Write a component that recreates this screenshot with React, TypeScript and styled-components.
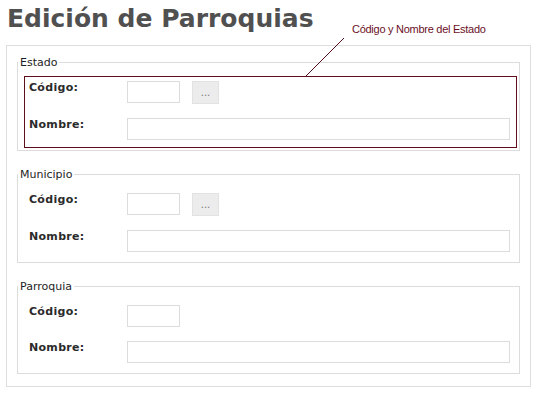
import React from 'react';
import styled, { createGlobalStyle } from 'styled-components';

const GlobalStyle = createGlobalStyle`
  html, body {
    margin: 0;
    padding: 0;
    background: #ffffff;
  }
  body {
    font-family: "DejaVu Sans", Verdana, sans-serif;
  }
`;

type Group = {
  title: string;
  lookup: boolean;
};

const groups: Group[] = [
  { title: 'Estado', lookup: true },
  { title: 'Municipio', lookup: true },
  { title: 'Parroquia', lookup: false },
];

const App = () => {
  return (
    <Page>
      <GlobalStyle />
      <Title>Edición de Parroquias</Title>
      <FormBox>
        {groups.map((g) => (
          <Group key={g.title}>
            <Legend>{g.title}</Legend>
            <Row>
              <Label>Código:</Label>
              <CodeInput type="text" />
              {g.lookup && <LookupButton type="button">...</LookupButton>}
            </Row>
            <Row>
              <Label>Nombre:</Label>
              <NameInput type="text" />
            </Row>
          </Group>
        ))}
      </FormBox>

      {/* annotation drawn over the screenshot */}
      <Note>Código y Nombre del Estado</Note>
      <Pointer width="60" height="50" viewBox="0 0 60 50">
        <line x1="5" y1="45" x2="44" y2="6" stroke="#5a0f1c" strokeWidth="1" />
      </Pointer>
      <Highlight />
    </Page>
  );
};

export default App;

// Styled Components
const Page = styled.div`
  position: relative;
  width: 538px;
  height: 397px;
  padding: 0 7px 0 6px;
  box-sizing: border-box;
`;

const Title = styled.h1`
  margin: 0 0 12px 1px;
  padding-top: 4px;
  font-family: "DejaVu Sans", Verdana, sans-serif;
  font-size: 25px;
  line-height: 29px;
  font-weight: bold;
  color: #505050;
`;

const FormBox = styled.div`
  border: 1px solid #dedede;
  padding: 10px 10px 12px;
`;

const Group = styled.fieldset`
  margin: 0 0 17px;
  padding: 12px 9px 10px 11px;
  border: 1px solid #dcdcdc;
  display: flex;
  flex-direction: column;
  gap: 14px;

  &:last-child {
    margin-bottom: 0;
  }
`;

const Legend = styled.legend`
  padding: 0 2px;
  margin-left: -11px;
  font-size: 11px;
  line-height: 13px;
  color: #1e1e1e;
`;

const Row = styled.div`
  display: flex;
  align-items: flex-start;
`;

const Label = styled.span`
  width: 98px;
  flex-shrink: 0;
  padding-top: 1px;
  font-size: 11px;
  line-height: 12px;
  font-weight: bold;
  color: #2b2b2b;
  letter-spacing: 0.3px;
`;

const Field = styled.input`
  box-sizing: border-box;
  height: 22px;
  margin: 0;
  padding: 0 4px;
  border: 1px solid #dcdcdc;
  background: #fff;
  font-size: 11px;
  outline: none;
`;

const CodeInput = styled(Field)`
  width: 53px;
`;

const NameInput = styled(Field)`
  flex: 1;
`;

const LookupButton = styled.button`
  box-sizing: border-box;
  width: 27px;
  height: 23px;
  margin-left: 12px;
  padding: 0;
  border: 1px solid #e2e2e2;
  background: #ececec;
  color: #777;
  font-family: "DejaVu Sans", Verdana, sans-serif;
  font-size: 10px;
  line-height: 20px;
`;

const Note = styled.div`
  position: absolute;
  left: 352px;
  top: 23px;
  font-family: "Liberation Sans", Arial, sans-serif;
  font-size: 11px;
  line-height: 13px;
  letter-spacing: -0.27px;
  color: #6b0f1f;
  white-space: nowrap;
`;

const Pointer = styled.svg`
  position: absolute;
  left: 300px;
  top: 32px;
`;

const Highlight = styled.div`
  position: absolute;
  left: 24px;
  top: 76px;
  width: 493px;
  height: 72px;
  box-sizing: border-box;
  border: 1px solid #5e0f1c;
  pointer-events: none;
`;
